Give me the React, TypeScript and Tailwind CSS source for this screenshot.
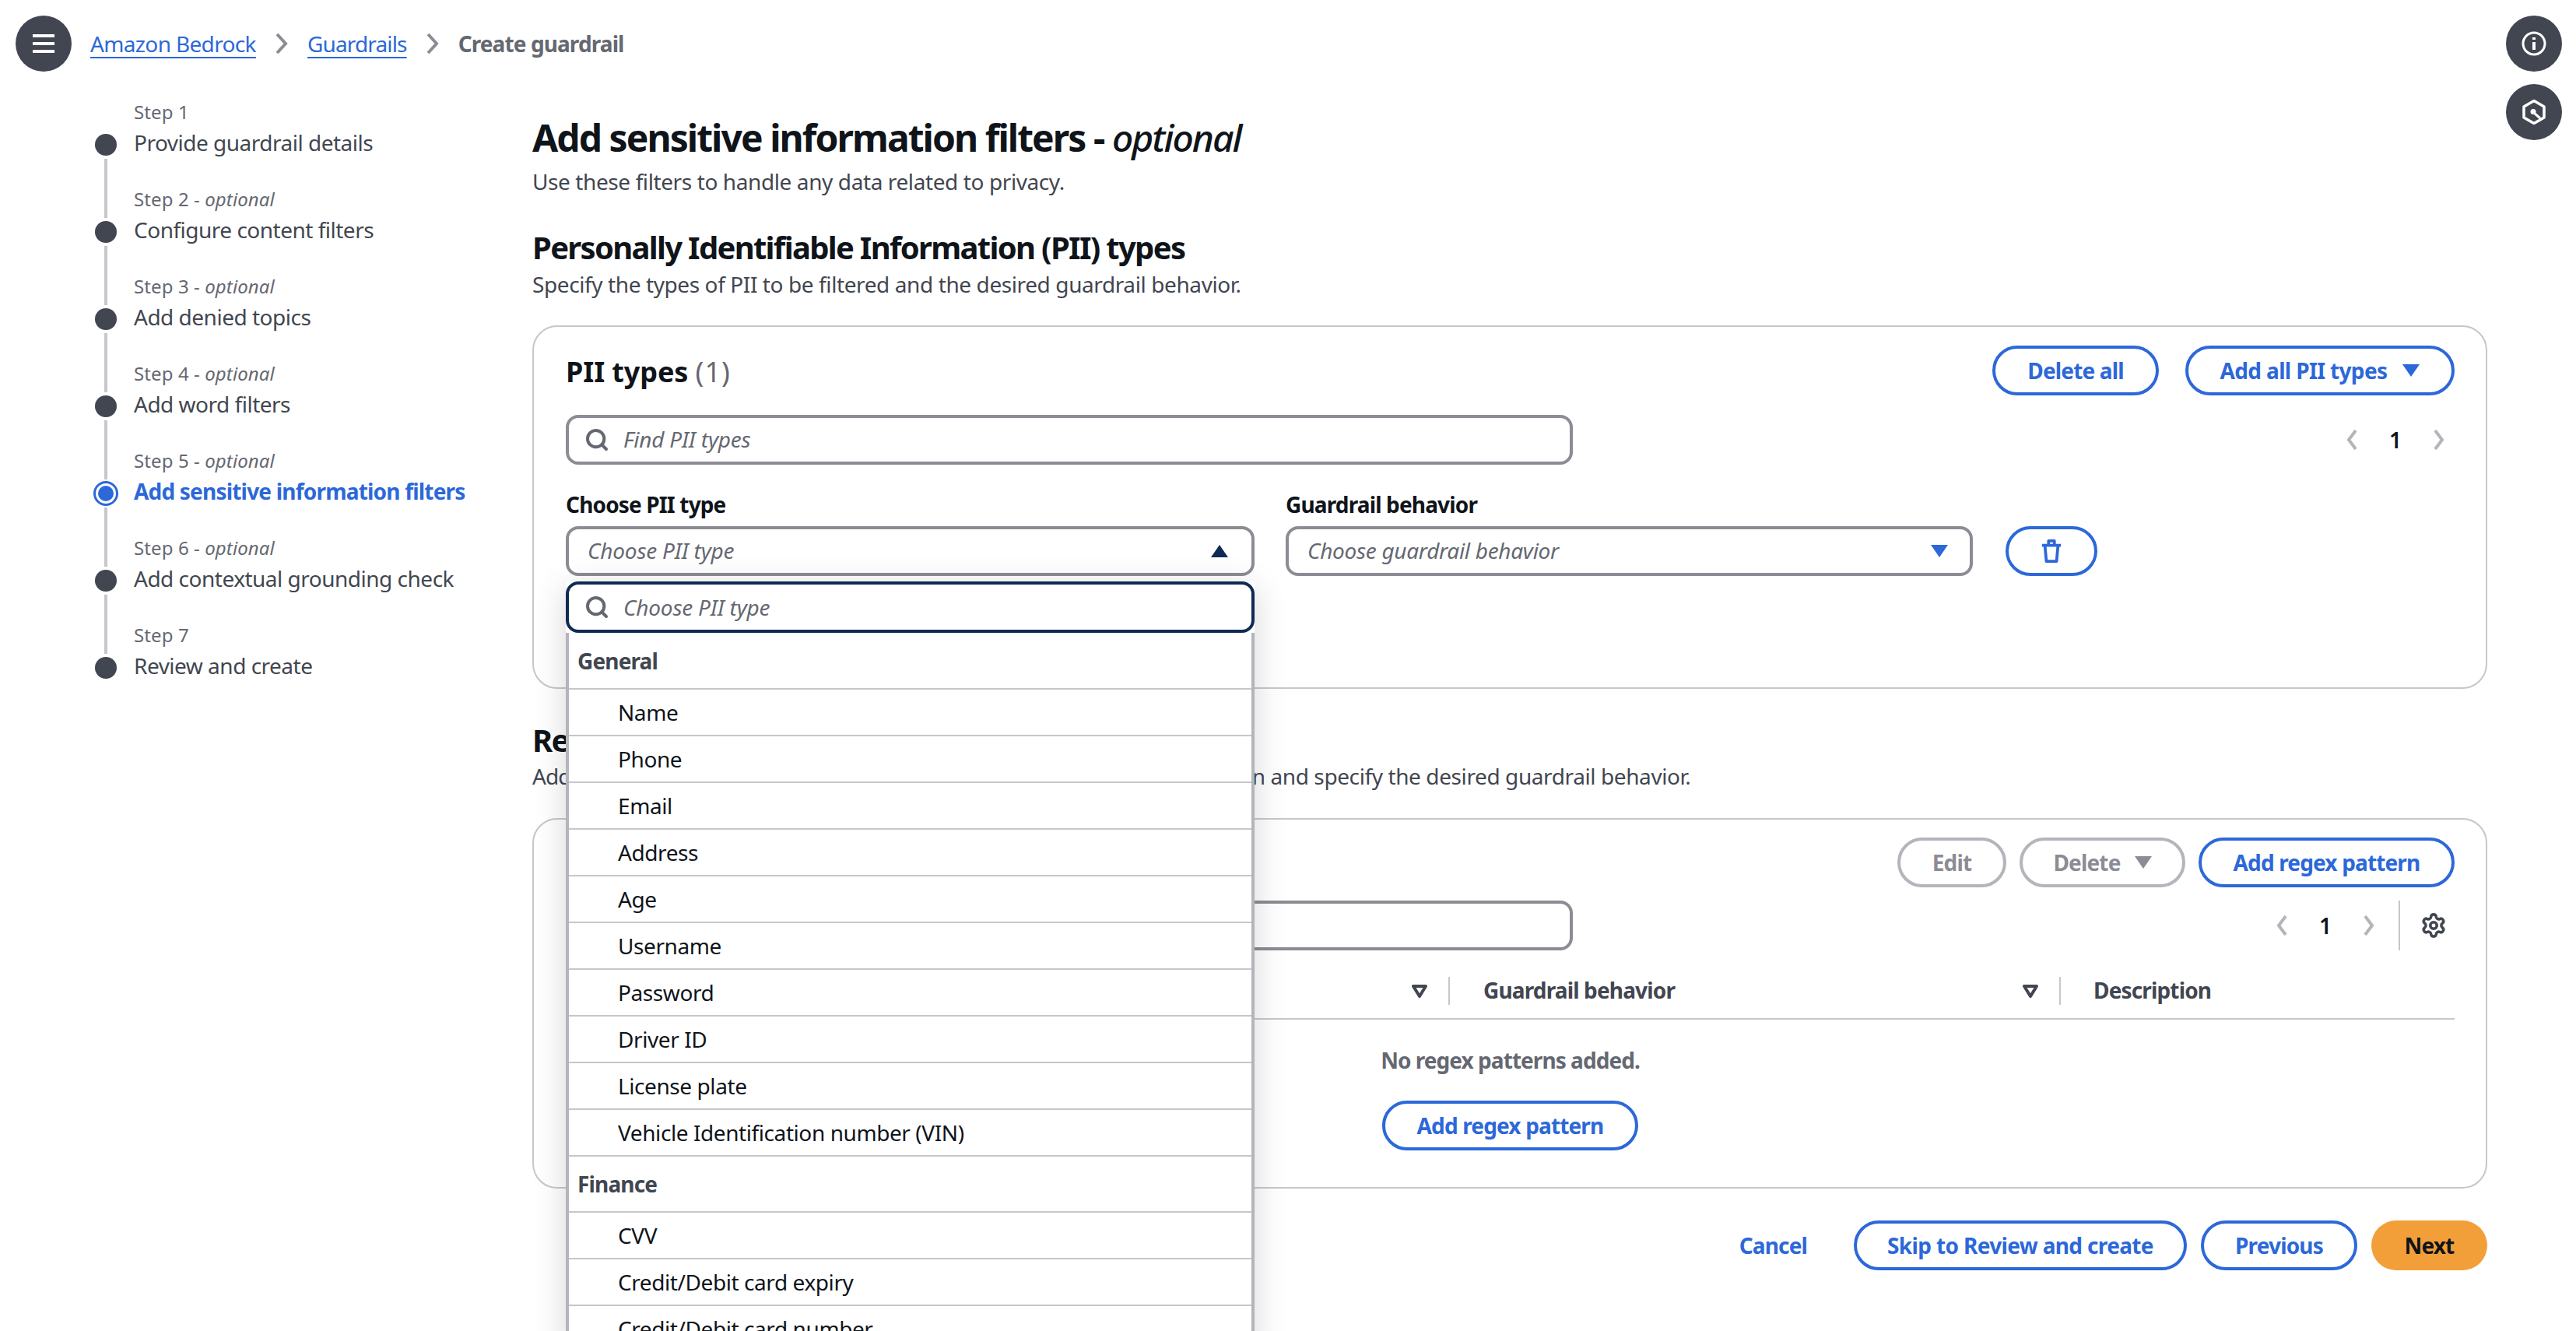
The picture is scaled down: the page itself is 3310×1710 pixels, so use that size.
import React from 'react';
import { Search, Settings } from 'lucide-react';

const steps = [
  { label: 'Step 1', optional: false, title: 'Provide guardrail details' },
  { label: 'Step 2', optional: true, title: 'Configure content filters' },
  { label: 'Step 3', optional: true, title: 'Add denied topics' },
  { label: 'Step 4', optional: true, title: 'Add word filters' },
  { label: 'Step 5', optional: true, title: 'Add sensitive information filters', active: true },
  { label: 'Step 6', optional: true, title: 'Add contextual grounding check' },
  { label: 'Step 7', optional: false, title: 'Review and create' },
];

const generalTypes = ['Name', 'Phone', 'Email', 'Address', 'Age', 'Username', 'Password', 'Driver ID', 'License plate', 'Vehicle Identification number (VIN)'];
const financeTypes = ['CVV', 'Credit/Debit card expiry', 'Credit/Debit card number'];

// small glyphs used across the form
const Caret = ({ className, up }: { className: string; up?: boolean }) => (
  <svg viewBox="0 0 22 16" className={className} fill="currentColor">
    {up ? <path d="M11 0 22 16H0Z" /> : <path d="M0 0h22L11 16Z" />}
  </svg>
);

const SortCaret = () => (
  <svg viewBox="0 0 20 17" className="w-[20px] h-[17px] text-[#424650]" fill="none" stroke="currentColor" strokeWidth="4" strokeLinejoin="round">
    <path d="M2 2h16L10 15Z" />
  </svg>
);

const Chevron = ({ left }: { left?: boolean }) => (
  <svg viewBox="0 0 16 26" className="w-[16px] h-[26px] text-[#b4b4bb]" fill="none" stroke="currentColor" strokeWidth="4">
    {left ? <path d="M13 1 4 13l9 12" /> : <path d="m3 1 9 12-9 12" />}
  </svg>
);

const CrumbChevron = () => (
  <svg viewBox="0 0 18 26" className="w-[18px] h-[26px] text-[#8c8c94]" fill="none" stroke="currentColor" strokeWidth="4">
    <path d="m3 1 11 12L3 25" />
  </svg>
);

const Trash = () => (
  <svg viewBox="0 0 28 32" className="w-[28px] h-[30px] text-[#2c68d9]" fill="none" stroke="currentColor" strokeWidth="4" strokeLinejoin="round">
    <path d="M1 8h26M5 8l2 22h14l2-22M10 8V2h8v6" />
  </svg>
);

const Pager = ({ gap }: { gap: string }) => (
  <div className={`flex items-center ${gap}`}>
    <Chevron left />
    <span className="text-[28px] font-semibold text-[#0f141a]">1</span>
    <Chevron />
  </div>
);

const OutlineButton = ({ children, className }: { children: React.ReactNode; className: string }) => (
  <button className={`h-[64px] flex items-center justify-center rounded-full border-4 border-[#2c68d9] text-[#2c68d9] text-[28px] font-bold tracking-[-0.85px] ${className}`}>
    {children}
  </button>
);

const DisabledButton = ({ children, className }: { children: React.ReactNode; className: string }) => (
  <button className={`h-[64px] flex items-center justify-center rounded-full border-4 border-[#b4b4bb] text-[#8c8c94] text-[28px] font-bold tracking-[-0.85px] ${className}`}>
    {children}
  </button>
);

const SearchBox = ({ placeholder, className, textClass }: { placeholder: string; className: string; textClass?: string }) => (
  <div className={`flex items-center rounded-[16px] border-4 pl-[20px] ${className}`}>
    <Search size={32} strokeWidth={3} className="text-[#656871] shrink-0" />
    <span className={`ml-[18px] text-[28px] italic text-[#656871] tracking-[-0.2px] ${textClass ?? ''}`}>{placeholder}</span>
  </div>
);

const DropdownList = () => (
  <div className="absolute top-[71px] left-0 right-0 z-10 shadow-[0_8px_40px_rgba(0,7,22,0.16)]">
    <SearchBox placeholder="Choose PII type" className="h-[66px] bg-white border-[#0f2a55]" />
    <div className="bg-white border-x-4 border-[#b4b4bb]">
      <div className="h-[73px] flex items-center pl-[11px] border-b-2 border-[#c6c6cd] text-[28px] font-bold text-[#424650] tracking-[-0.85px]">General</div>
      {generalTypes.map(t => (
        <div key={t} className="h-[60px] flex items-center pl-[63px] border-b-2 border-[#c6c6cd] text-[28px] text-[#0f141a] tracking-[-0.42px]">{t}</div>
      ))}
      <div className="h-[72px] flex items-center pl-[11px] border-b-2 border-[#c6c6cd] text-[28px] font-bold text-[#424650] tracking-[-0.85px]">Finance</div>
      {financeTypes.map(t => (
        <div key={t} className="h-[60px] flex items-center pl-[63px] border-b-2 border-[#c6c6cd] text-[28px] text-[#0f141a] tracking-[-0.42px]">{t}</div>
      ))}
    </div>
  </div>
);

const Sidebar = () => (
  <aside className="w-[684px] shrink-0 pl-[122px]">
    {steps.map((s, i) => (
      <div key={s.label}>
        <div className={`flex ${i === 0 ? 'h-[80px]' : 'h-[84px]'}`}>
          <div className="w-[28px] flex justify-center py-[4px]">
            {i > 0 && <div className="w-[4px] bg-[#c6c6cd]" />}
          </div>
          <div className="ml-[22px] self-end mb-[12px] text-[24px] leading-[32px] text-[#656871] tracking-[0.1px]">
            {s.label}
            {s.optional && <span> - <i>optional</i></span>}
          </div>
        </div>
        <div className="flex items-center h-[28px]">
          {s.active ? (
            <div className="w-[32px] h-[32px] -mx-[2px] shrink-0 rounded-full border-[3px] border-[#2c68d9] flex items-center justify-center">
              <div className="w-[20px] h-[20px] rounded-full bg-[#2c68d9]" />
            </div>
          ) : (
            <div className="w-[28px] h-[28px] shrink-0 rounded-full bg-[#424650]" />
          )}
          <span className={`ml-[22px] -mt-[6px] text-[28px] whitespace-nowrap ${s.active ? 'font-bold text-[#2c68d9] tracking-[-0.8px]' : 'text-[#424650] tracking-[-0.5px]'}`}>{s.title}</span>
        </div>
      </div>
    ))}
  </aside>
);

export default function App() {
  return (
    <div className="relative w-[3310px] h-[1710px] overflow-hidden bg-white font-['Noto_Sans',sans-serif] text-[#0f141a]">
      <header className="flex items-center pt-[20px] pl-[20px]">
        <div className="w-[72px] h-[72px] rounded-full bg-[#424650] flex flex-col items-center justify-center gap-[6px]">
          <div className="w-[28px] h-[4px] bg-white" />
          <div className="w-[28px] h-[4px] bg-white" />
          <div className="w-[28px] h-[4px] bg-white" />
        </div>
        <nav className="ml-[24px] flex items-center gap-[24px] text-[28px] tracking-[-0.65px]">
          <a className="text-[#2c68d9] underline underline-offset-[6px] decoration-2">Amazon Bedrock</a>
          <CrumbChevron />
          <a className="text-[#2c68d9] underline underline-offset-[6px] decoration-2 tracking-[-0.85px]">Guardrails</a>
          <CrumbChevron />
          <span className="font-bold text-[#656871] tracking-[-0.9px]">Create guardrail</span>
        </nav>
      </header>

      <div className="absolute top-[20px] right-[18px] flex flex-col gap-[16px]">
        <div className="w-[72px] h-[72px] rounded-full bg-[#424650] flex items-center justify-center">
          <svg viewBox="0 0 32 32" className="w-[32px] h-[32px] text-white" fill="none" stroke="currentColor" strokeWidth="3">
            <circle cx="16" cy="16" r="14" />
            <path d="M16 14v10M16 8v3" strokeWidth="4" />
          </svg>
        </div>
        <div className="w-[72px] h-[72px] rounded-full bg-[#424650] flex items-center justify-center">
          <svg viewBox="0 0 32 32" className="w-[32px] h-[32px] text-white" fill="none" stroke="currentColor" strokeWidth="3.5" strokeLinejoin="round">
            <path d="M16 1.5 29 9v14l-13 7.5L3 23V9Z" />
            <circle cx="15" cy="15.5" r="3.5" fill="currentColor" stroke="none" />
            <path d="m16 17 8 7" strokeWidth="3" />
          </svg>
        </div>
      </div>

      <div className="flex">
        <Sidebar />

        <main className="w-[2512px]">
          <h1 className="mt-[57px] text-[48px] leading-[56px] font-bold tracking-[-1.95px]">
            Add sensitive information filters - <i className="font-medium">optional</i>
          </h1>
          <p className="mt-[8px] text-[28px] leading-[40px] text-[#424650] tracking-[-0.4px]">Use these filters to handle any data related to privacy.</p>

          <h2 className="mt-[41px] text-[40px] leading-[48px] font-bold tracking-[-1.7px]">Personally Identifiable Information (PII) types</h2>
          <p className="mt-[3px] text-[28px] leading-[40px] text-[#424650] tracking-[-0.4px]">Specify the types of PII to be filtered and the desired guardrail behavior.</p>

          <section className="mt-[33px] h-[467px] rounded-[32px] border-2 border-[#c6c6cd] pt-[24px] pl-[41px] pr-[40px]">
            <div className="flex items-center justify-between h-[64px]">
              <h3 className="mt-[4px] text-[36px] font-bold tracking-[-0.1px]">PII types <span className="font-normal text-[#656871] tracking-[1px]">(1)</span></h3>
              <div className="flex gap-[34px]">
                <OutlineButton className="w-[214px]">Delete all</OutlineButton>
                <OutlineButton className="w-[346px] gap-[20px]">
                  <span className="tracking-[-0.65px]">Add all PII types</span>
                  <Caret className="w-[22px] h-[16px]" />
                </OutlineButton>
              </div>
            </div>

            <div className="mt-[25px] flex items-center justify-between">
              <SearchBox placeholder="Find PII types" className="w-[1294px] h-[64px] border-[#8c8c94]" textClass="-mt-[3px]" />
              <Pager gap="gap-[40px] mr-[12px]" />
            </div>

            <div className="mt-[31px] flex items-start">
              <div className="relative w-[885px]">
                <label className="block text-[28px] leading-[40px] font-bold tracking-[-0.85px]">Choose PII type</label>
                <div className="mt-[8px] h-[64px] rounded-[16px] border-4 border-[#8c8c94] flex items-center justify-between pl-[24px] pr-[30px]">
                  <span className="-mt-[3px] text-[28px] italic text-[#656871] tracking-[-0.2px]">Choose PII type</span>
                  <Caret up className="w-[22px] h-[16px] text-[#0f2a55]" />
                </div>
                <div className="absolute top-[48px] left-0 right-0">
                  <DropdownList />
                </div>
              </div>
              <div className="ml-[40px] w-[883px]">
                <label className="block text-[28px] leading-[40px] font-bold tracking-[-0.85px]">Guardrail behavior</label>
                <div className="mt-[8px] h-[64px] rounded-[16px] border-4 border-[#8c8c94] flex items-center justify-between pl-[24px] pr-[28px]">
                  <span className="-mt-[3px] text-[28px] italic text-[#656871] tracking-[-0.3px]">Choose guardrail behavior</span>
                  <Caret className="w-[22px] h-[16px] text-[#2c68d9]" />
                </div>
              </div>
              <OutlineButton className="ml-[42px] mt-[48px] w-[118px]"><Trash /></OutlineButton>
            </div>
          </section>

          <h2 className="mt-[42px] text-[40px] leading-[48px] font-bold tracking-[-1.7px]">Regex patterns</h2>
          <p className="mt-[2px] text-[28px] leading-[40px] text-[#424650] tracking-[-0.4px]">
            <span className="tracking-[-0.95px]">Add up to 10 regex patterns to filter for specific types of sensitive informatio</span>n and specify the desired guardrail behavior.
          </p>

          <section className="mt-[34px] h-[476px] rounded-[32px] border-2 border-[#c6c6cd] pt-[23px] pl-[41px] pr-[40px]">
            <div className="flex items-center justify-between h-[64px]">
              <h3 className="text-[36px] font-bold">Regex patterns <span className="font-normal text-[#656871]">(0)</span></h3>
              <div className="flex gap-[17px]">
                <DisabledButton className="w-[140px]">Edit</DisabledButton>
                <DisabledButton className="w-[213px] gap-[18px]">
                  Delete
                  <Caret className="w-[22px] h-[16px]" />
                </DisabledButton>
                <OutlineButton className="w-[329px]">Add regex pattern</OutlineButton>
              </div>
            </div>

            <div className="mt-[17px] flex items-center justify-between">
              <div className="w-[1294px] h-[64px] rounded-[16px] border-4 border-[#8c8c94]" />
              <div className="flex items-center mr-[10px]">
                <Pager gap="gap-[40px]" />
                <div className="ml-[30px] w-[2px] h-[64px] bg-[#c6c6cd]" />
                <Settings size={34} strokeWidth={2.5} className="ml-[26px] text-[#424650]" />
              </div>
            </div>

            <div className="grid grid-cols-[1136px_785px_1fr] pt-[34px] pb-[17px] border-b-2 border-[#c6c6cd]">
              <div className="h-[36px] flex items-center justify-end border-r-2 border-[#c6c6cd] pr-[27px]"><SortCaret /></div>
              <div className="h-[36px] flex items-center justify-between border-r-2 border-[#c6c6cd] pl-[43px] pr-[27px]">
                <span className="-mt-[3px] text-[28px] font-bold text-[#424650] tracking-[-0.85px]">Guardrail behavior</span>
                <SortCaret />
              </div>
              <div className="h-[36px] flex items-center pl-[42px]">
                <span className="-mt-[3px] text-[28px] font-bold text-[#424650] tracking-[-0.85px]">Description</span>
              </div>
            </div>

            <div className="flex flex-col items-center pt-[32px]">
              <p className="text-[28px] leading-[40px] font-bold text-[#656871] tracking-[-0.95px]">No regex patterns added.</p>
              <OutlineButton className="mt-[32px] w-[329px]">Add regex pattern</OutlineButton>
            </div>
          </section>

          <footer className="mt-[41px] flex items-center justify-end gap-[18px]">
            <a className="mr-[42px] text-[28px] font-bold text-[#2c68d9] tracking-[-0.85px]">Cancel</a>
            <OutlineButton className="w-[428px]"><span className="tracking-[-0.65px]">Skip to Review and create</span></OutlineButton>
            <OutlineButton className="w-[201px]">Previous</OutlineButton>
            <button className="w-[149px] h-[64px] rounded-full bg-[#f39f39] text-[28px] font-bold tracking-[-0.85px]">Next</button>
          </footer>
        </main>
      </div>
    </div>
  );
}
